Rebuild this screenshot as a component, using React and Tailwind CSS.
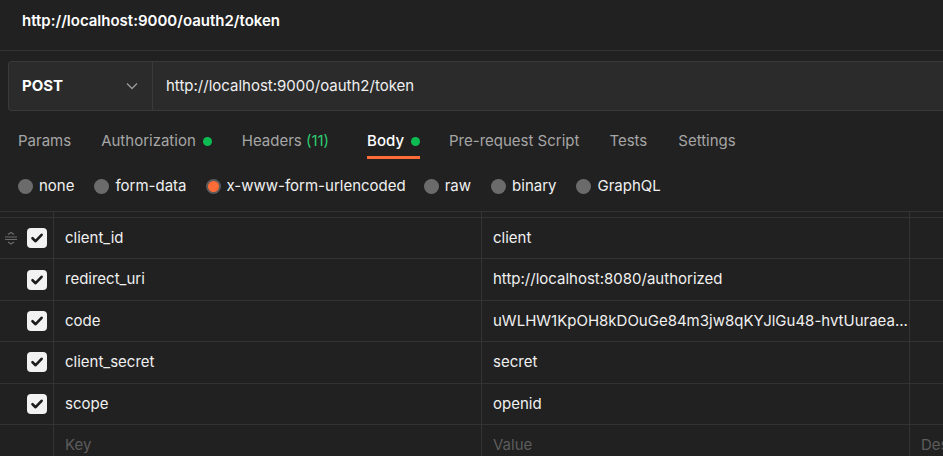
import React from "react";

const rows = [
  { k: "client_id", v: "client", handle: true },
  { k: "redirect_uri", v: "http://localhost:8080/authorized" },
  { k: "code", v: "uWLHW1KpOH8kDOuGe84m3jw8qKYJlGu48-hvtUuraea..." },
  { k: "client_secret", v: "secret" },
  { k: "scope", v: "openid" },
];

function Check() {
  return (
    <div className="w-[20px] h-[20px] rounded-[4px] bg-[#f2f2f2] flex items-center justify-center">
      <svg width="14" height="14" viewBox="0 0 14 14">
        <path d="M2.5 7.2 L5.6 10.2 L11.6 3.8" fill="none" stroke="#1c1c1c" strokeWidth="2.6" strokeLinecap="round" strokeLinejoin="round" />
      </svg>
    </div>
  );
}

function Handle() {
  return (
    <svg width="14" height="14" viewBox="0 0 14 14" className="absolute left-[4px]">
      <path d="M4 3.5 L7 1.5 L10 3.5" fill="none" stroke="#6b6b6b" strokeWidth="1.2" />
      <path d="M1 6 H13 M1 8.5 H13" stroke="#6b6b6b" strokeWidth="1.2" />
      <path d="M4 11 L7 13 L10 11" fill="none" stroke="#6b6b6b" strokeWidth="1.2" />
    </svg>
  );
}

function Radio({ label, active, className = "" }) {
  return (
    <div className={"flex items-center gap-[6px] " + className}>
      {active ? (
        <div className="w-[15px] h-[15px] rounded-full bg-[#5a5a5a] flex items-center justify-center">
          <div className="w-[11px] h-[11px] rounded-full bg-[#ff6c37]" />
        </div>
      ) : (
        <div className="w-[15px] h-[15px] rounded-full bg-[#6b6b6b]" />
      )}
      <span className="text-[15px] text-[#f0f0f0]">{label}</span>
    </div>
  );
}

function Dot() {
  return <span className="inline-block w-[9px] h-[9px] rounded-full bg-[#0cbb52] ml-[7px]" />;
}

export default function App() {
  return (
    <div className="w-[943px] h-[456px] overflow-hidden bg-[#212121] text-[#f0f0f0]" style={{ fontFamily: "Inter, 'Noto Sans', sans-serif" }}>
      <div className="h-[51px] border-b border-[#333333] flex items-center pl-[22px] pb-[7px]">
        <span className="text-[15px] font-semibold text-white">http://localhost:9000/oauth2/token</span>
      </div>
      <div className="pt-[10px] pl-[8px]">
        <div className="h-[50px] flex border border-r-0 border-[#3a3a3a] rounded-l-[4px] bg-[#2b2b2b]">
          <div className="w-[144px] shrink-0 border-r border-[#3a3a3a] flex items-center justify-between pl-[13px] pr-[14px]">
            <span className="text-[15px] font-bold text-white">POST</span>
            <svg width="12" height="8" viewBox="0 0 12 8">
              <path d="M1 1.5 L6 6.5 L11 1.5" fill="none" stroke="#9a9a9a" strokeWidth="1.3" />
            </svg>
          </div>
          <div className="flex items-center pl-[13px]">
            <span className="text-[15px] text-[#f0f0f0]">http://localhost:9000/oauth2/token</span>
          </div>
        </div>
      </div>
      <div className="flex pl-[18px] h-[60px] items-center text-[15px] text-[#a6a6a6]">
        <span className="mr-[30px]">Params</span>
        <span className="mr-[30px] flex items-center">Authorization<Dot /></span>
        <span className="mr-[38px]">Headers <span className="text-[#2ecc71]">(11)</span></span>
        <span className="mr-[29px] relative flex items-center text-white font-medium">
          Body<Dot />
          <span className="absolute left-0 right-0 top-[26px] h-[3px] bg-[#ff6c37]" />
        </span>
        <span className="mr-[30px]">Pre-request Script</span>
        <span className="mr-[31px]">Tests</span>
        <span>Settings</span>
      </div>
      <div className="flex items-center pl-[18px] h-[30px]">
        <Radio label="none" />
        <Radio label="form-data" className="ml-[20px]" />
        <Radio label="x-www-form-urlencoded" active className="ml-[19px]" />
        <Radio label="raw" className="ml-[18px]" />
        <Radio label="binary" className="ml-[20px]" />
        <Radio label="GraphQL" className="ml-[20px]" />
      </div>
      <div className="mt-[10px] border-t border-[#333333]">
        <div className="h-[6px] flex border-b border-[#333333]">
          <div className="w-[54px] shrink-0 border-r border-[#333333]" />
          <div className="w-[428px] shrink-0 border-r border-[#333333]" />
          <div className="w-[428px] shrink-0 border-r border-[#333333]" />
        </div>
        {rows.map((r) => (
          <div key={r.k} className="h-[41.4px] flex border-b border-[#333333] text-[15px]">
            <div className="w-[54px] shrink-0 border-r border-[#333333] relative flex items-center pl-[27px]">
              {r.handle && <Handle />}
              <Check />
            </div>
            <div className="w-[428px] shrink-0 border-r border-[#333333] flex items-center pl-[11px] text-[#f0f0f0]">{r.k}</div>
            <div className="w-[428px] shrink-0 border-r border-[#333333] flex items-center pl-[11px] text-[#f0f0f0] whitespace-nowrap overflow-hidden">{r.v}</div>
            <div className="flex-1" />
          </div>
        ))}
        <div className="h-[41.4px] flex text-[15px] text-[#5c5c5c]">
          <div className="w-[54px] shrink-0 border-r border-[#333333]" />
          <div className="w-[428px] shrink-0 border-r border-[#333333] flex items-center pl-[11px]">Key</div>
          <div className="w-[428px] shrink-0 border-r border-[#333333] flex items-center pl-[11px]">Value</div>
          <div className="flex-1 flex items-center pl-[11px] whitespace-nowrap overflow-hidden">Description</div>
        </div>
      </div>
    </div>
  );
}
